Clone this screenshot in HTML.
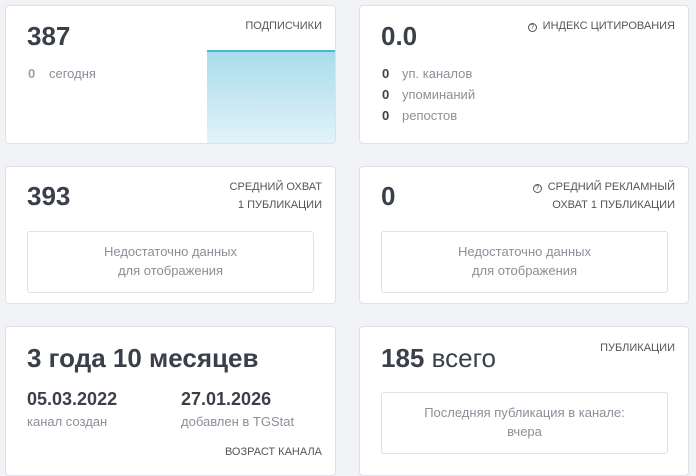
<!DOCTYPE html><html><head><meta charset="utf-8"><style>
*{margin:0;padding:0;box-sizing:border-box}
html,body{width:696px;height:464px}
body{background:#f2f3f7;font-family:"Liberation Sans",sans-serif;position:relative;overflow:hidden;color:#3b3f4a}
.c{position:absolute;background:#fff;border:1px solid #dfe1e6;border-radius:4px;overflow:hidden}
.a{position:absolute}
.big{font-size:26px;font-weight:bold;color:#3b3f4a;line-height:1}
.lab{font-size:11px;color:#555;text-align:right;line-height:18px;text-transform:uppercase}
.g{font-size:13px;color:#8a8f99}
.n{font-size:13px;font-weight:bold;color:#3b3f4a}
.box{position:absolute;border:1px solid #dfe1e6;border-radius:3px;text-align:center;font-size:13px;color:#8a8f99;line-height:19px}
.q{display:inline-block;width:9px;height:9px;border:1.2px solid #555;border-radius:50%;font-size:7px;line-height:7px;text-align:center;margin-right:6px;vertical-align:0}
</style></head><body>
<div class="c" style="left:5px;top:5px;width:331px;height:139px">
 <div class="a big" style="left:21px;top:17px">387</div>
 <div class="a lab" style="right:13px;top:11px">Подписчики</div>
 <div class="a g" style="left:22px;top:60px;font-weight:bold;color:#9aa0aa">0</div>
 <div class="a g" style="left:43px;top:60px">сегодня</div>
 <div class="a" style="left:201px;top:44px;width:130px;height:95px;border-top:2px solid #4bb6d8;background:linear-gradient(#a9dcec,#e4f3f9)"></div>
</div>
<div class="c" style="left:359px;top:5px;width:330px;height:139px">
 <div class="a big" style="left:21px;top:17px">0.0</div>
 <div class="a lab" style="right:13px;top:11px"><span class="q">?</span>Индекс цитирования</div>
 <div class="a n" style="left:22px;top:57px;line-height:21px">0<br>0<br>0</div>
 <div class="a g" style="left:42px;top:57px;line-height:21px">уп. каналов<br>упоминаний<br>репостов</div>
</div>
<div class="c" style="left:5px;top:166px;width:331px;height:138px">
 <div class="a big" style="left:21px;top:16px">393</div>
 <div class="a lab" style="right:13px;top:11px">Средний охват<br>1 публикации</div>
 <div class="box" style="left:21px;top:64px;width:287px;height:62px;padding-top:10px">Недостаточно данных<br>для отображения</div>
</div>
<div class="c" style="left:359px;top:166px;width:330px;height:138px">
 <div class="a big" style="left:21px;top:16px">0</div>
 <div class="a lab" style="right:13px;top:11px"><span class="q">?</span>Средний рекламный<br>охват 1 публикации</div>
 <div class="box" style="left:21px;top:64px;width:287px;height:62px;padding-top:10px">Недостаточно данных<br>для отображения</div>
</div>
<div class="c" style="left:5px;top:326px;width:331px;height:150px">
 <div class="a big" style="left:21px;top:18px;font-size:26px">3 года 10 месяцев</div>
 <div class="a" style="left:21px;top:62px;font-size:18px;font-weight:bold">05.03.2022</div>
 <div class="a g" style="left:21px;top:87px">канал создан</div>
 <div class="a" style="left:175px;top:62px;font-size:18px;font-weight:bold">27.01.2026</div>
 <div class="a g" style="left:175px;top:87px">добавлен в TGStat</div>
 <div class="a lab" style="right:13px;top:116px">Возраст канала</div>
</div>
<div class="c" style="left:359px;top:326px;width:330px;height:150px">
 <div class="a" style="left:21px;top:18px;font-size:26px;line-height:1"><b>185</b> всего</div>
 <div class="a lab" style="right:13px;top:12px">Публикации</div>
 <div class="box" style="left:21px;top:65px;width:287px;height:62px;padding-top:10px">Последняя публикация в канале:<br>вчера</div>
</div>
</body></html>
